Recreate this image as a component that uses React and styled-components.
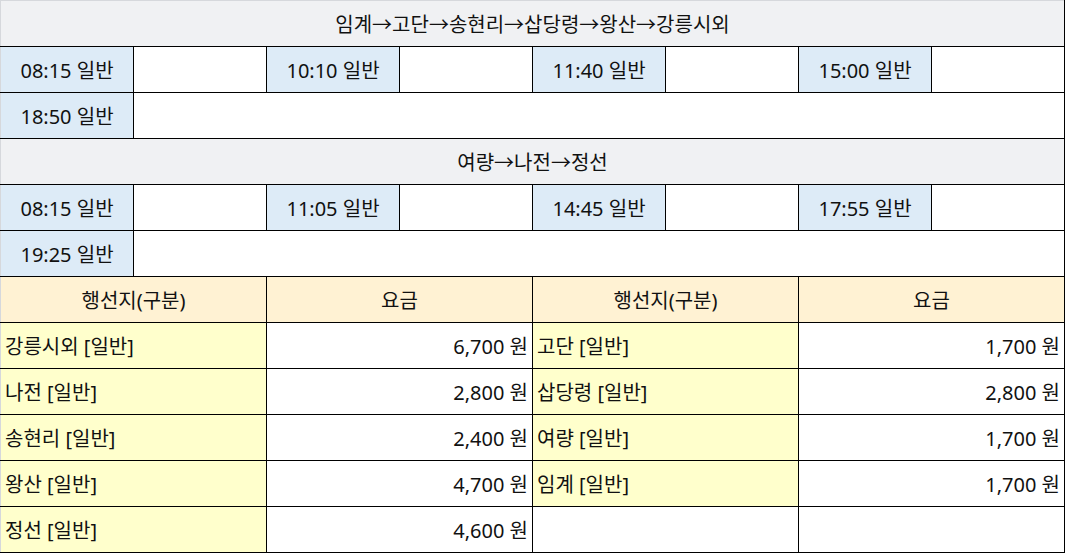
import React from 'react';
import styled, { createGlobalStyle } from 'styled-components';

const GlobalStyle = createGlobalStyle`
  html, body {
    margin: 0;
    padding: 0;
    background: #fff;
  }
  body {
    font-family: "Noto Sans", "Noto Sans CJK KR", sans-serif;
    color: #111;
  }
`;

const Table = styled.table`
  width: 1065px;
  border-collapse: collapse;
  table-layout: fixed;
  font-size: 20px;
  border-top: 1px solid #d6d8dc;
  border-left: 1px solid #d6d8dc;
`;

const Row = styled.tr`
  height: 46px;
`;

const Cell = styled.td`
  border: 1px solid #000;
  padding: 0 4px;
  height: 45px;
  white-space: nowrap;
  overflow: hidden;
  text-align: ${p => p.$align || 'left'};
  background: ${p => p.$bg || '#fff'};
  &:first-child {
    border-left-color: #d6d8dc;
  }
`;

const RouteHead = styled(Cell)`
  background: #f0f1f3;
  text-align: center;
  border-left-color: #d6d8dc;
`;

const TopRow = styled(Row)`
  & > td {
    border-top-color: #d6d8dc;
  }
`;

const TimeCell = styled(Cell)`
  background: #ddebf7;
  text-align: center;
`;

const FeeHead = styled(Cell)`
  background: #fff2d3;
  text-align: center;
`;

const Place = styled(Cell)`
  background: #ffffcc;
`;

const Price = styled(Cell)`
  text-align: right;
`;

const routes = [
  {
    title: '임계→고단→송현리→삽당령→왕산→강릉시외',
    times: ['08:15', '10:10', '11:40', '15:00'],
    last: '18:50',
  },
  {
    title: '여량→나전→정선',
    times: ['08:15', '11:05', '14:45', '17:55'],
    last: '19:25',
  },
];

const fares = [
  [['강릉시외', '6,700'], ['고단', '1,700']],
  [['나전', '2,800'], ['삽당령', '2,800']],
  [['송현리', '2,400'], ['여량', '1,700']],
  [['왕산', '4,700'], ['임계', '1,700']],
  [['정선', '4,600'], null],
];

function RouteBlock({ route, first }) {
  const HeadRow = first ? TopRow : Row;
  return (
    <>
      <HeadRow>
        <RouteHead colSpan={8}>{route.title}</RouteHead>
      </HeadRow>
      <Row>
        {route.times.map(t => (
          <React.Fragment key={t}>
            <TimeCell>{t} 일반</TimeCell>
            <Cell />
          </React.Fragment>
        ))}
      </Row>
      <Row>
        <TimeCell>{route.last} 일반</TimeCell>
        <Cell colSpan={7} />
      </Row>
    </>
  );
}

export default function App() {
  return (
    <>
      <GlobalStyle />
      <Table>
        <tbody>
          {routes.map((r, i) => (
            <RouteBlock key={r.title} route={r} first={i === 0} />
          ))}
          <Row>
            <FeeHead colSpan={2}>행선지(구분)</FeeHead>
            <FeeHead colSpan={2}>요금</FeeHead>
            <FeeHead colSpan={2}>행선지(구분)</FeeHead>
            <FeeHead colSpan={2}>요금</FeeHead>
          </Row>
          {fares.map((pair, i) => (
            <Row key={i}>
              {pair.map((f, j) =>
                f ? (
                  <React.Fragment key={j}>
                    <Place colSpan={2}>{f[0]} [일반]</Place>
                    <Price colSpan={2}>{f[1]} 원</Price>
                  </React.Fragment>
                ) : (
                  <React.Fragment key={j}>
                    <Cell colSpan={2} />
                    <Cell colSpan={2} />
                  </React.Fragment>
                )
              )}
            </Row>
          ))}
        </tbody>
      </Table>
    </>
  );
}
